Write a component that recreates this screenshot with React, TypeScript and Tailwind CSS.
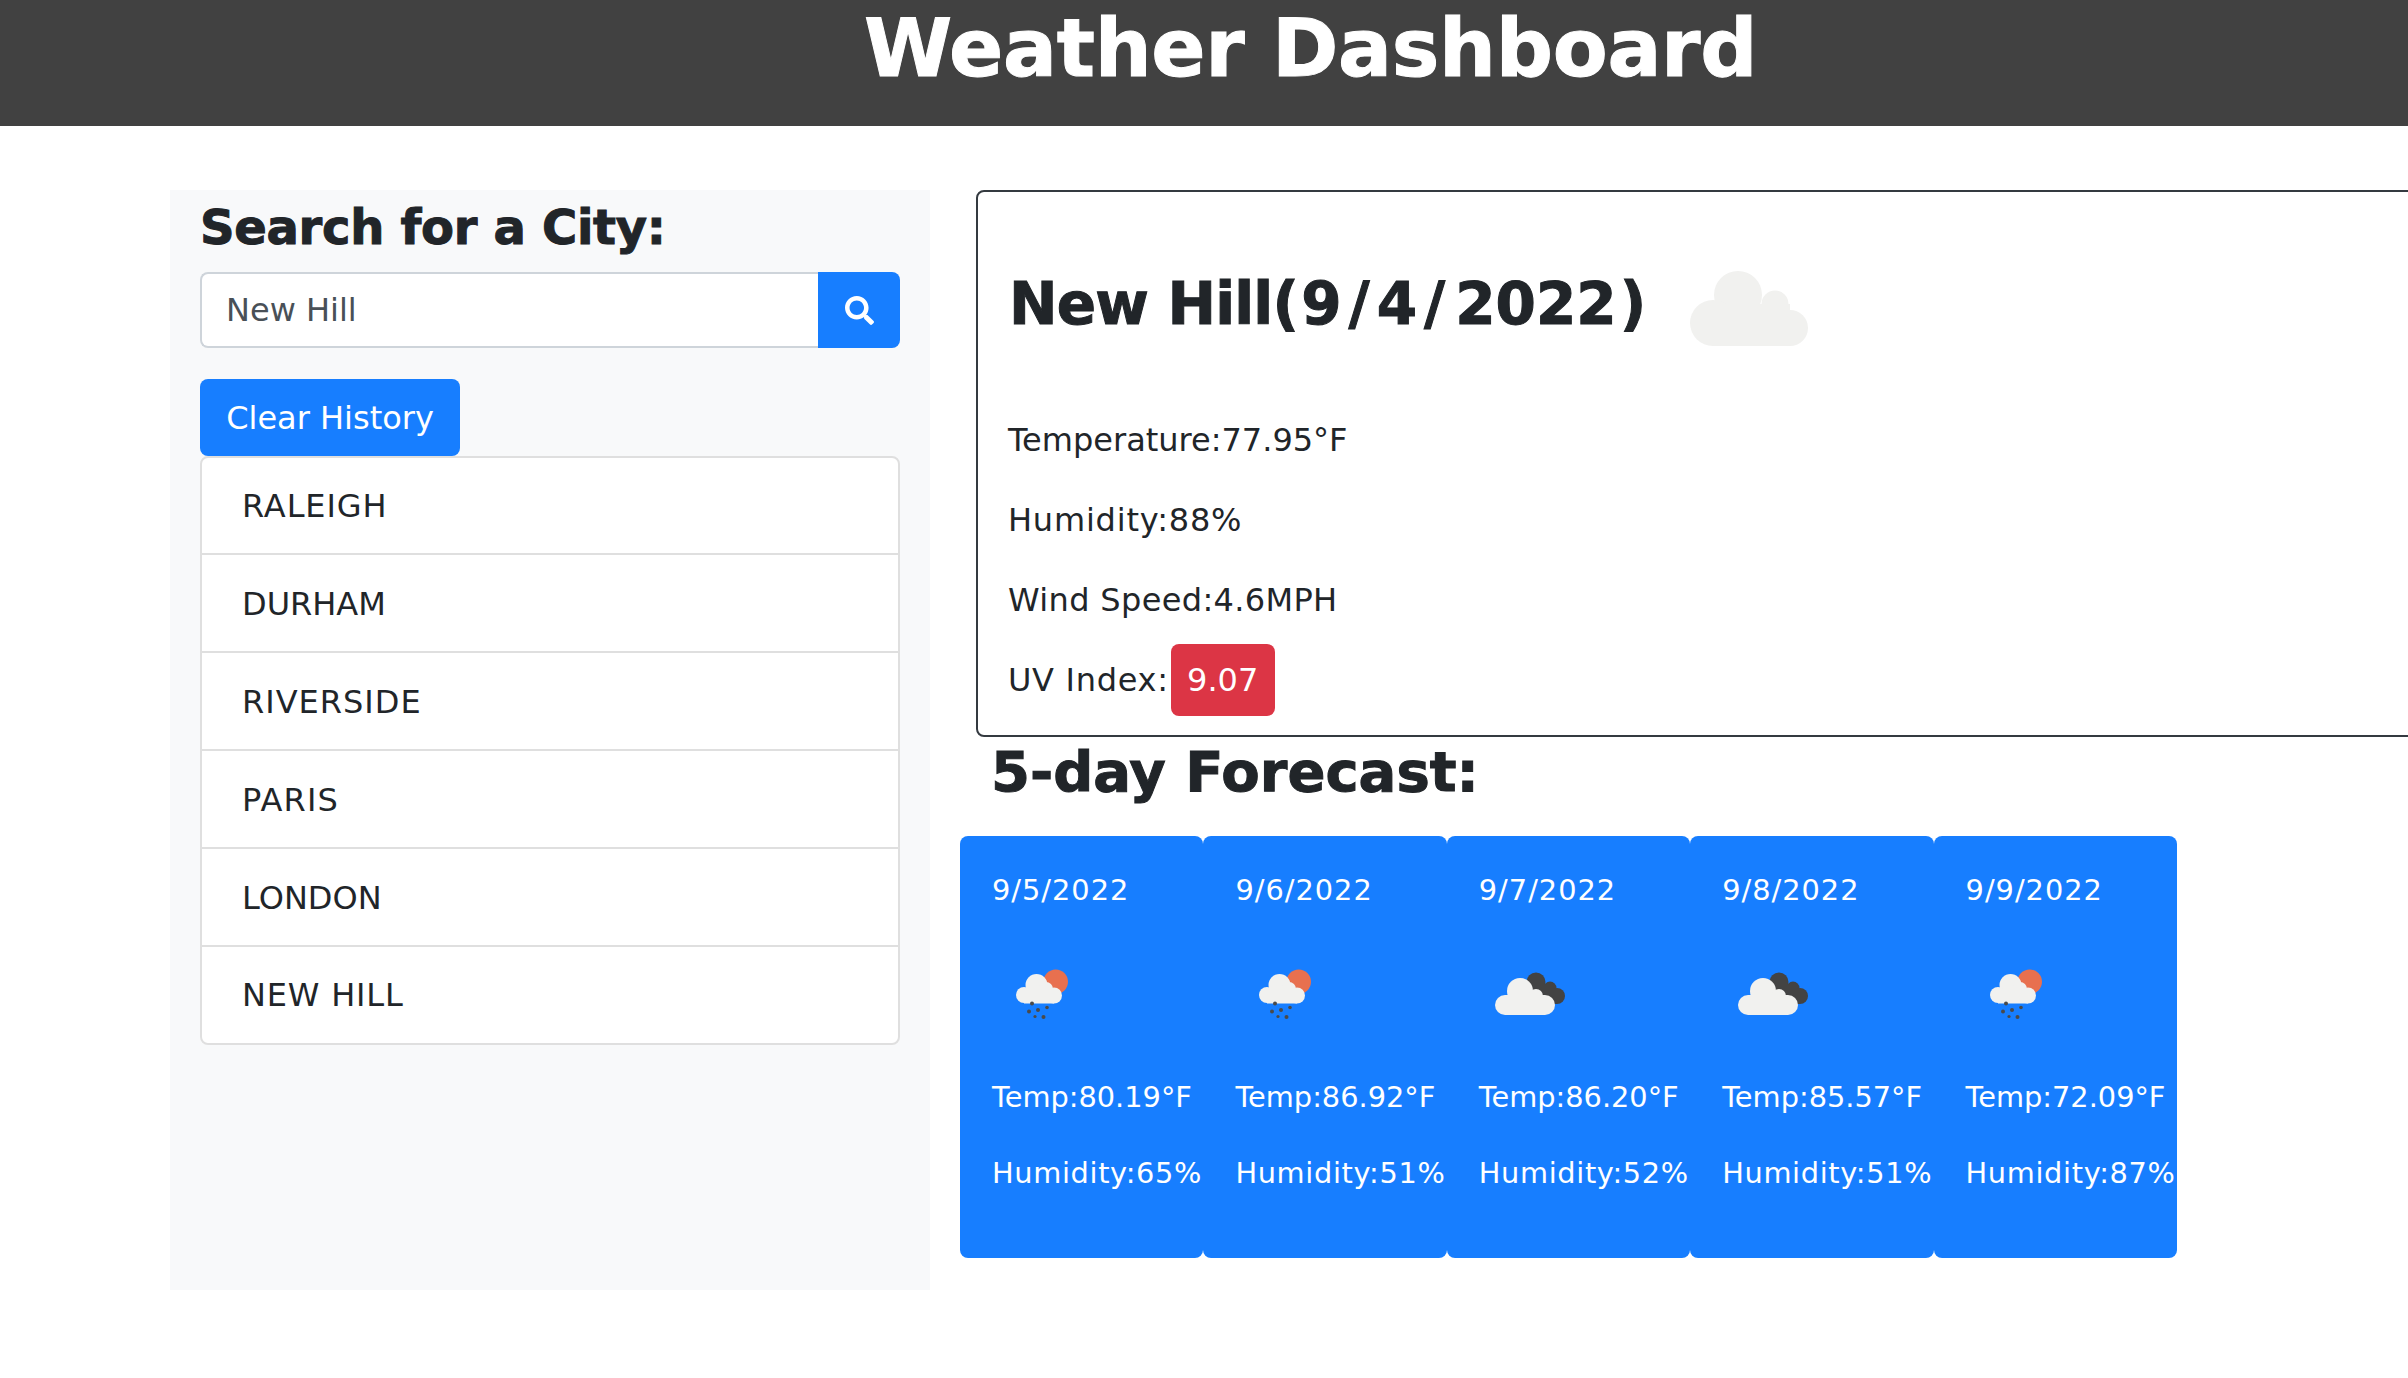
import { FaSearch } from "react-icons/fa";

function HeroCloud() {
  return (
    <svg width="200" height="200" viewBox="0 0 200 200" className="shrink-0">
      <g fill="#f1f1ef" transform="translate(24 38)">
        <circle cx="68" cy="46" r="24" />
        <circle cx="105" cy="55" r="13.5" />
        <circle cx="43" cy="74" r="23" />
        <circle cx="120" cy="79" r="18" />
        <rect x="43" y="55" width="77" height="42" />
      </g>
    </svg>
  );
}

function RainIcon() {
  return (
    <svg width="100" height="100" viewBox="0 0 100 100">
      <g transform="translate(8 6)">
        <circle cx="55.7" cy="31.7" r="12.3" fill="#e8704f" />
        <g fill="#f1f1ef">
          <circle cx="36.5" cy="35" r="11" />
          <circle cx="24" cy="45" r="8" />
          <circle cx="54" cy="45.5" r="8" />
          <circle cx="46" cy="39" r="7" />
          <rect x="24" y="40" width="30" height="13.5" />
        </g>
        <g fill="#4a4a4a">
          <circle cx="32" cy="53.5" r="2" />
          <circle cx="29" cy="61.5" r="2" />
          <circle cx="38" cy="60" r="2" />
          <circle cx="47" cy="57.5" r="1.8" />
          <circle cx="35" cy="66.5" r="1.6" />
          <circle cx="43.5" cy="67" r="2" />
        </g>
      </g>
    </svg>
  );
}

function DarkCloudIcon() {
  return (
    <svg width="100" height="100" viewBox="0 0 100 100" className="overflow-visible">
      <g transform="translate(-9 6)">
        <g fill="#434343">
          <circle cx="66" cy="32" r="9.5" />
          <circle cx="80" cy="38" r="6.5" />
          <circle cx="87" cy="46" r="8" />
          <rect x="62" y="34" width="22" height="14" />
          <rect x="75" y="46" width="12" height="8" />
        </g>
        <g fill="#f1f1ef">
          <circle cx="50" cy="41" r="13" />
          <circle cx="66" cy="46" r="7" />
          <circle cx="35" cy="55" r="10" />
          <circle cx="75" cy="55" r="10" />
          <rect x="35" y="45" width="40" height="20" />
        </g>
      </g>
    </svg>
  );
}

const cities = [
  { name: "RALEIGH", cls: "tracking-[0.9px]", h: "h-[97px] border-b-2" },
  { name: "DURHAM", cls: "", h: "h-[98px] border-b-2 pt-[2px]" },
  { name: "RIVERSIDE", cls: "tracking-[1px]", h: "h-[98px] border-b-2 pt-[2px]" },
  { name: "PARIS", cls: "tracking-[1.2px]", h: "h-[98px] border-b-2 pt-[2px]" },
  { name: "LONDON", cls: "", h: "h-[98px] border-b-2 pt-[2px]" },
  { name: "NEW HILL", cls: "tracking-[0.8px]", h: "h-[96px]" },
];

const forecast = [
  { date: "9/5/2022", icon: "rain", temp: "80.19", hum: "65" },
  { date: "9/6/2022", icon: "rain", temp: "86.92", hum: "51" },
  { date: "9/7/2022", icon: "dark", temp: "86.20", hum: "52" },
  { date: "9/8/2022", icon: "dark", temp: "85.57", hum: "51" },
  { date: "9/9/2022", icon: "rain", temp: "72.09", hum: "87" },
];

export default function App() {
  return (
    <div className="h-[1378px] w-full overflow-hidden bg-white text-[#212529] font-['DejaVu_Sans',sans-serif] text-[32px] leading-[48px]">
      <header className="h-[126px] bg-[#414141] pl-[864px] overflow-hidden">
        <h1 className="text-[80px] leading-[98px] font-bold text-white whitespace-nowrap tracking-[-0.3px] [-webkit-text-stroke:1px_white]">
          Weather Dashboard
        </h1>
      </header>

      <main className="flex pl-[170px] pt-[64px]">
        <aside className="w-[760px] h-[1100px] shrink-0 bg-[#f8f9fa] px-[30px]">
          <h3 className="text-[48px] leading-[57px] font-bold mt-[9px] whitespace-nowrap tracking-[-0.3px] [-webkit-text-stroke:1px_#212529]">
            Search for a City:
          </h3>
          <div className="flex h-[76px] mt-[16px]">
            <div className="flex-1 bg-white border-2 border-r-0 border-[#ced4da] rounded-l-[8px] px-[24px] text-[#495057] flex items-center">
              New Hill
            </div>
            <button className="w-[82px] flex items-center justify-center rounded-r-[8px] bg-[#177eff] text-white">
              <FaSearch size={29} />
            </button>
          </div>
          <button className="mt-[31px] block h-[77px] w-[260px] rounded-[8px] bg-[#177eff] text-white text-center whitespace-nowrap">
            Clear History
          </button>
          <ul className="border-2 border-[#dfdfdf] rounded-[8px] bg-white">
            {cities.map((c) => (
              <li key={c.name} className={`${c.h} border-[#dfdfdf] flex items-center pl-[40px] ${c.cls}`}>
                {c.name}
              </li>
            ))}
          </ul>
        </aside>

        <section className="ml-[30px] flex-1 min-w-0">
          <div className="ml-[16px] w-[1600px] h-[547px] border-2 border-[#343a40] rounded-[8px] px-[31px]">
            <div className="flex items-center h-[226px] pt-[12px] -mb-[2px]">
              <h2 className="text-[58px] leading-[76px] mb-[15px] font-bold whitespace-nowrap [-webkit-text-stroke:1px_#212529]">
                <span className="tracking-[-0.8px]">New Hill(</span>
                <span className="ml-[3px]">9</span>
                <span className="mx-[7px]">/</span>
                <span>4</span>
                <span className="mx-[7px]">/</span>
                <span className="ml-[3px]">2022</span>
                <span className="ml-[3px]">)</span>
              </h2>
              <HeroCloud />
            </div>
            <p className="h-[48px] mb-[32px] -ml-[1px]">Temperature:77.95°F</p>
            <p className="h-[48px] mb-[32px] -ml-[1px] tracking-[0.8px]">Humidity:88%</p>
            <p className="h-[48px] mb-[32px] -ml-[1px] tracking-[0.35px]">Wind Speed:4.6MPH</p>
            <div className="h-[48px] flex items-center -ml-[1px]">
              <span className="tracking-[0.7px]">UV Index:</span>
              <span className="ml-[2px] shrink-0 h-[72px] w-[104px] bg-[#dc3545] text-white rounded-[8px] flex items-center justify-center">
                9.07
              </span>
            </div>
          </div>

          <h3 className="ml-[31px] text-[56px] leading-[67px] font-bold whitespace-nowrap mt-[1px] [-webkit-text-stroke:1px_#212529]">
            5-day Forecast:
          </h3>

          <div className="flex mt-[31px] text-[28.8px] leading-[43.2px] text-white">
            {forecast.map((f) => (
              <div key={f.date} className="w-[243.4px] h-[422px] shrink-0 rounded-[8px] bg-[#177eff] pt-[33px] pl-[32px] whitespace-nowrap">
                <p className="tracking-[1px]">{f.date}</p>
                <div className="mt-[32px] h-[100px] w-[100px]">
                  {f.icon === "rain" ? <RainIcon /> : <DarkCloudIcon />}
                </div>
                <p className="mt-[32px]">Temp:{f.temp}°F</p>
                <p className="mt-[33px] tracking-[0.65px]">Humidity:{f.hum}%</p>
              </div>
            ))}
          </div>
        </section>
      </main>
    </div>
  );
}
